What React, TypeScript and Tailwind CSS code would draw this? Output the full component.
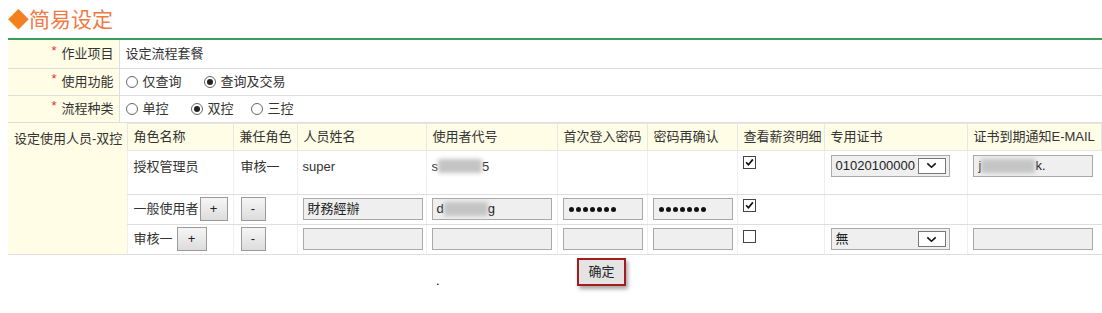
import React from "react";

const FONT = { fontFamily: '"Liberation Sans", "Noto Sans CJK SC", sans-serif' };

function Radio({ checked }: { checked?: boolean }) {
  return (
    <span className="inline-flex w-[12px] h-[12px] rounded-full border border-[#666] bg-white items-center justify-center shrink-0">
      {checked && <span className="w-[6px] h-[6px] rounded-full bg-[#222]" />}
    </span>
  );
}

function Check({ checked }: { checked?: boolean }) {
  return (
    <span className="inline-flex w-[13px] h-[13px] border border-[#444] bg-white items-center justify-center">
      {checked && (
        <svg viewBox="0 0 13 13" width="13" height="13">
          <path d="M2.5 6.2 L5.2 9.2 L10.5 2.8" stroke="#111" strokeWidth="2" fill="none" />
        </svg>
      )}
    </span>
  );
}

function Star() {
  return <span className="text-[#e8322c] text-[13px] relative top-[-3px] mr-[5px]">*</span>;
}

function Blur({ w }: { w: number }) {
  return <span className="inline-block h-[14px] bg-[#c4c4c4] blur-[2px] align-middle" style={{ width: w }} />;
}

function Dots() {
  return (
    <span className="flex items-center gap-[2px] pl-[1px]">
      {[0, 1, 2, 3, 4, 5, 6].map((i) => (
        <span key={i} className="w-[5px] h-[5px] rounded-full bg-[#111]" />
      ))}
    </span>
  );
}

function Box({ w, children, className = "" }: { w: number; children?: React.ReactNode; className?: string }) {
  return (
    <div
      className={"h-[22px] border border-[#a9a9a9] bg-[#efefef] flex items-center px-[4px] text-[13px] text-[#222] " + className}
      style={{ width: w }}
    >
      {children}
    </div>
  );
}

function SelectBox({ w, value }: { w: number; value: string }) {
  return (
    <div className="h-[22px] border border-[#a9a9a9] bg-[#efefef] flex items-center justify-between pl-[4px] pr-[3px] text-[13px] text-[#222]" style={{ width: w }}>
      <span>{value}</span>
      <span className="w-[28px] h-[16px] border border-[#777] bg-white flex items-center justify-center">
        <svg viewBox="0 0 12 8" width="11" height="7">
          <path d="M1.2 1.5 L6 6 L10.8 1.5" stroke="#111" strokeWidth="1.8" fill="none" />
        </svg>
      </span>
    </div>
  );
}

function Btn({ label, w }: { label: string; w: number }) {
  return (
    <button
      className="h-[24px] border border-[#9a9a9a] bg-gradient-to-b from-[#f6f6f6] to-[#dcdcdc] text-[13px] text-[#222] flex items-center justify-center"
      style={{ width: w }}
    >
      {label}
    </button>
  );
}

export default function App() {
  const lab = "bg-[#fffde6] text-right pr-[5px] border-b border-r border-[#dedede] text-[13px] text-[#333]";
  const val = "pl-[6px] border-b border-[#dedede] text-[13px] text-[#333]";
  const th = "bg-[#fffde6] border border-[#e6e6e6] text-left pl-[6px] font-normal text-[13px] text-[#333] h-[27px]";
  const td = "border-b border-l border-b-[#dedede] border-l-[#efefef] pl-[5px] text-[13px] text-[#333] align-middle";
  return (
    <div className="w-[1102px] h-[313px] bg-white overflow-hidden" style={FONT}>
      <div className="pl-[8px]">
        <div className="h-[38px] flex items-center text-[21px] text-[#ef7a45]" style={{ fontFamily: '"Noto Sans CJK SC", sans-serif' }}>
          <span className="text-[#f2801e]">◆</span>
          <span>简易设定</span>
        </div>
        <div className="border-t-2 border-[#3f9a5e] w-[1094px]">
          <table className="w-[1094px] border-collapse table-fixed">
            <colgroup>
              <col style={{ width: 111 }} />
              <col />
            </colgroup>
            <tbody>
              <tr className="h-[28px]">
                <td className={lab}><Star />作业项目</td>
                <td className={val}>设定流程套餐</td>
              </tr>
              <tr className="h-[27px]">
                <td className={lab}><Star />使用功能</td>
                <td className={val}>
                  <div className="flex items-center">
                    <Radio /><span className="ml-[5px] mr-[22px]">仅查询</span>
                    <Radio checked /><span className="ml-[5px]">查询及交易</span>
                  </div>
                </td>
              </tr>
              <tr className="h-[27px]">
                <td className={lab}><Star />流程种类</td>
                <td className={val}>
                  <div className="flex items-center">
                    <Radio /><span className="ml-[5px] mr-[22px]">单控</span>
                    <Radio checked /><span className="ml-[5px] mr-[17px]">双控</span>
                    <Radio /><span className="ml-[5px]">三控</span>
                  </div>
                </td>
              </tr>
            </tbody>
          </table>
          <table className="w-[1094px] border-collapse table-fixed">
            <colgroup>
              <col style={{ width: 119 }} />
              <col style={{ width: 106 }} />
              <col style={{ width: 64 }} />
              <col style={{ width: 129 }} />
              <col style={{ width: 131 }} />
              <col style={{ width: 90 }} />
              <col style={{ width: 90 }} />
              <col style={{ width: 87 }} />
              <col style={{ width: 143 }} />
              <col />
            </colgroup>
            <tbody>
              <tr>
                <td rowSpan={4} className="bg-[#fffde6] align-top pl-[6px] pt-[6px] text-[13px] text-[#333] border-b border-[#dedede] whitespace-nowrap">设定使用人员-双控</td>
                <th className={th}>角色名称</th>
                <th className={th}>兼任角色</th>
                <th className={th}>人员姓名</th>
                <th className={th}>使用者代号</th>
                <th className={th}>首次登入密码</th>
                <th className={th}>密码再确认</th>
                <th className={th}>查看薪资明细</th>
                <th className={th}>专用证书</th>
                <th className={th + " whitespace-nowrap"}>证书到期通知E-MAIL</th>
              </tr>
              <tr className="h-[44px]">
                <td className={td + " align-top pt-[6px] pl-[6px] border-l-[#e6e6e6]"}>授权管理员</td>
                <td className={td + " align-top pt-[6px] pl-[7px]"}>审核一</td>
                <td className={td + " align-top pt-[6px] pl-[4px]"}>super</td>
                <td className={td + " align-top pt-[6px] pl-[5px]"}>
                  <span className="inline-flex items-center">s<Blur w={44} />5</span>
                </td>
                <td className={td}></td>
                <td className={td}></td>
                <td className={td + " align-top pt-[4px] pl-[4px]"}><Check checked /></td>
                <td className={td + " align-top pt-[4px] pl-[6px]"}><SelectBox w={119} value="01020100000" /></td>
                <td className={td + " align-top pt-[4px] pl-[1px]"}>
                  <Box w={120}><span className="pl-[1px]">j</span><Blur w={54} /><span>k.</span></Box>
                </td>
              </tr>
              <tr className="h-[30px]">
                <td className={td + " pl-[6px] border-l-[#e6e6e6]"}>
                  <div className="flex items-center">一般使用者<span className="ml-[1px]"><Btn label="+" w={28} /></span></div>
                </td>
                <td className={td + " pl-[7px]"}><Btn label="-" w={25} /></td>
                <td className={td + " pl-[2px]"}><Box w={120}>財務經辦</Box></td>
                <td className={td + " pl-[3px]"}><Box w={120}>d<Blur w={44} />g</Box></td>
                <td className={td + " pl-[2px]"}><Box w={80}><Dots /></Box></td>
                <td className={td + " pl-[2px]"}><Box w={80}><Dots /></Box></td>
                <td className={td + " align-top pt-[3px] pl-[4px]"}><Check checked /></td>
                <td className={td}></td>
                <td className={td}></td>
              </tr>
              <tr className="h-[30px]">
                <td className={td + " pl-[6px] border-l-[#e6e6e6]"}>
                  <div className="flex items-center">审核一<span className="ml-[4px]"><Btn label="+" w={30} /></span></div>
                </td>
                <td className={td + " pl-[7px]"}><Btn label="-" w={25} /></td>
                <td className={td + " pl-[2px]"}><Box w={120} /></td>
                <td className={td + " pl-[3px]"}><Box w={120} /></td>
                <td className={td + " pl-[2px]"}><Box w={80} /></td>
                <td className={td + " pl-[2px]"}><Box w={80} /></td>
                <td className={td + " align-top pt-[4px] pl-[4px]"}><Check /></td>
                <td className={td + " pl-[6px]"}><SelectBox w={119} value="無" /></td>
                <td className={td + " pl-[1px]"}><Box w={120} /></td>
              </tr>
            </tbody>
          </table>
        </div>
        <div className="pl-[569px] pt-[3px]">
          <div className="w-[49px] h-[28px] border-2 border-[#a41c1c] bg-[#e4e4e4] shadow-[2px_3px_4px_rgba(0,0,0,0.35)] flex items-center justify-center text-[13px] text-[#222]">
            确定
          </div>
        </div>
        <div className="pl-[428px] -mt-[12px] text-[13px] leading-[14px] text-[#000]">.</div>
      </div>
    </div>
  );
}
